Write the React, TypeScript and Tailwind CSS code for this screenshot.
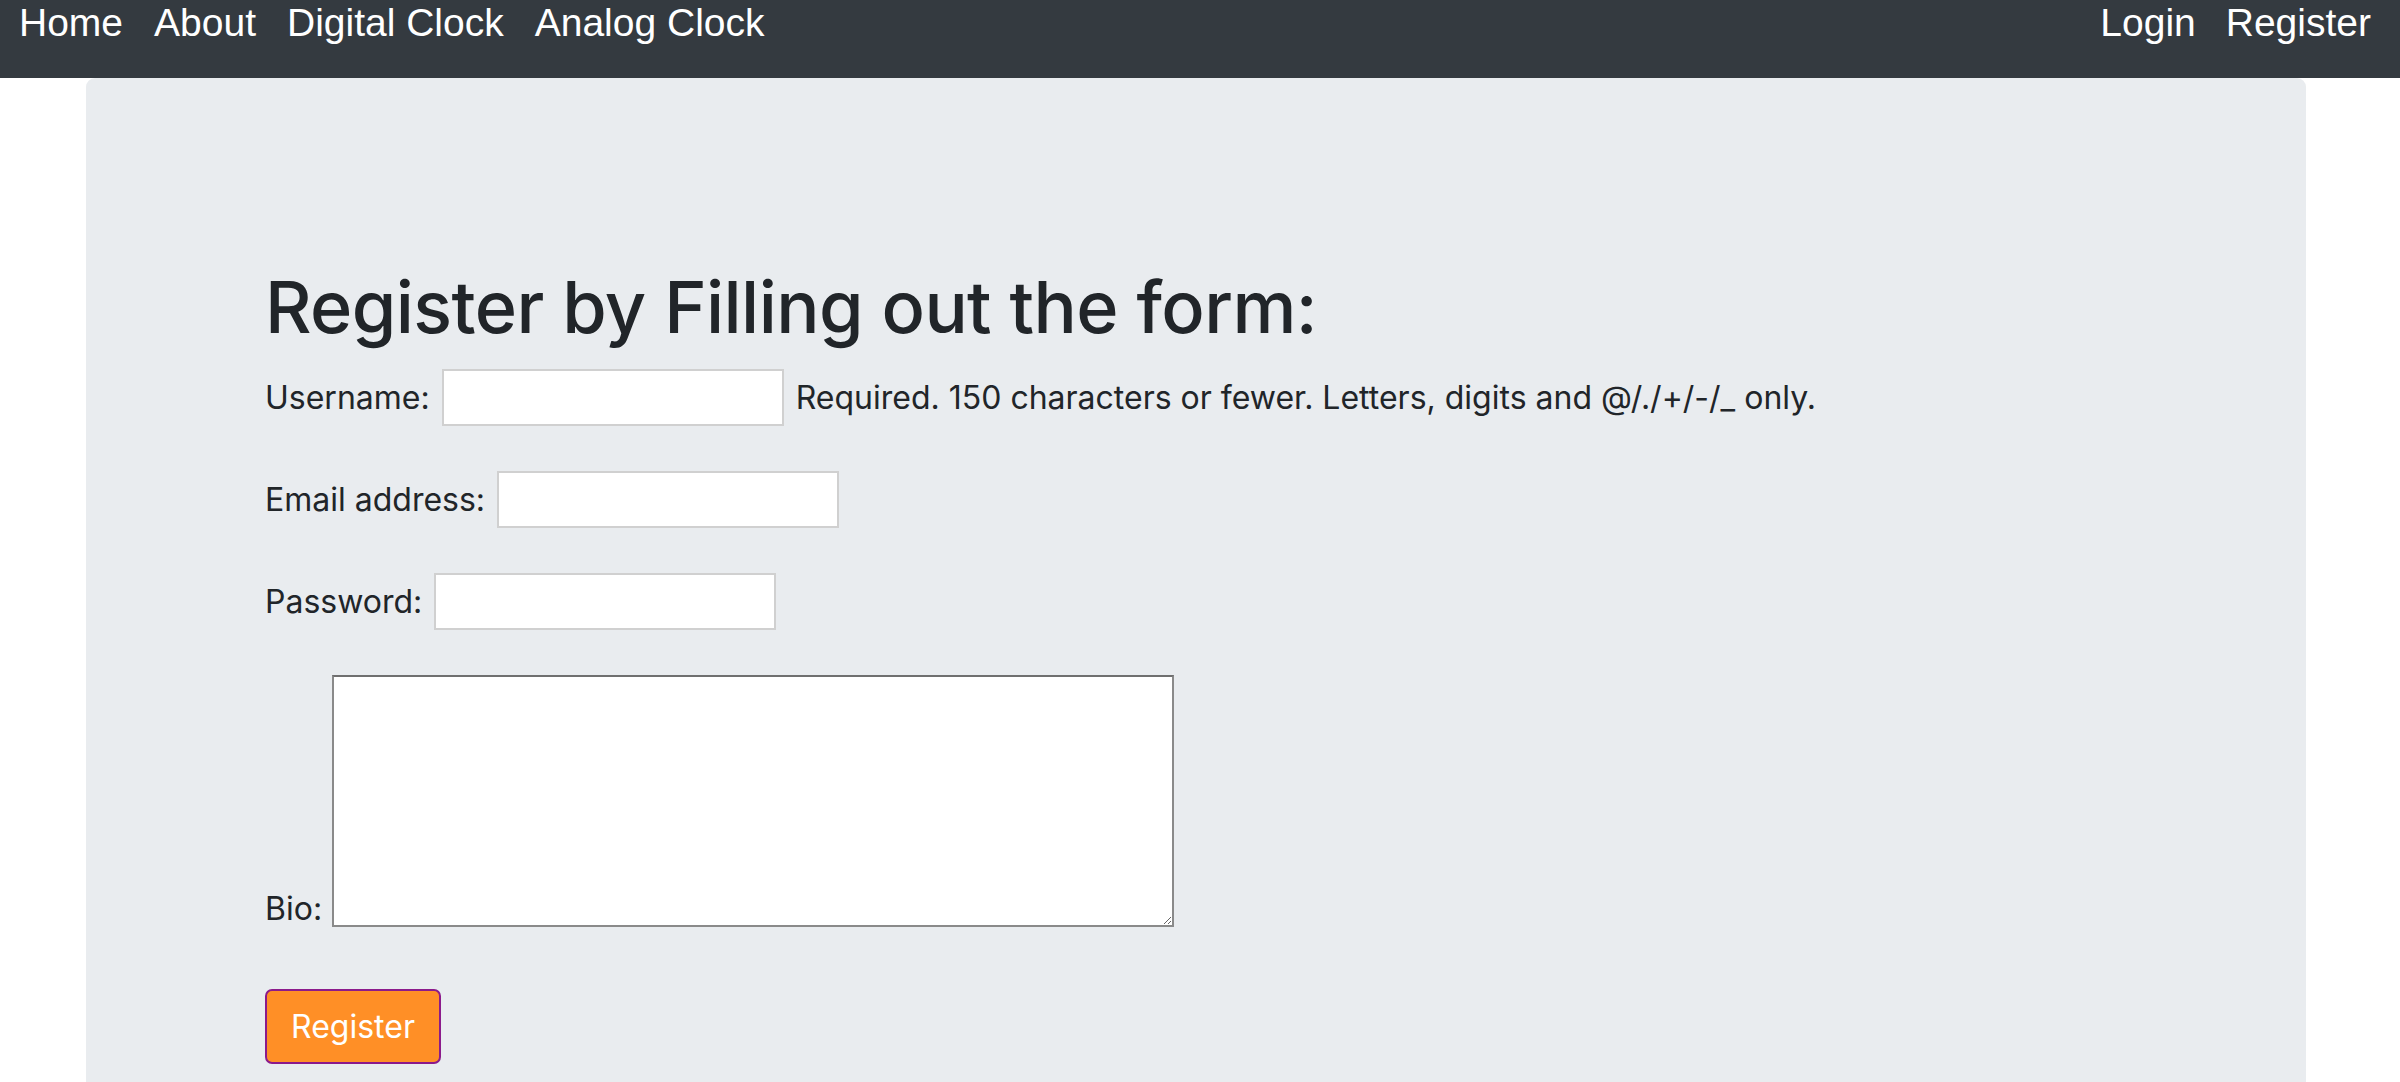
import React from 'react';

const navFont = { fontFamily: '"Liberation Sans", Arial, sans-serif' };
const bodyFont = { fontFamily: 'Inter, "Noto Sans", sans-serif' };

function FormRow({ label, help }: { label: string; help?: string }) {
  return (
    <div className="flex items-center h-[57px] mb-[45px] text-[32px] text-[#212529]">
      <label>{label}</label>
      <input type="text" className="ml-[12px] w-[342px] h-[57px] bg-white border-2 border-[#d0d0d0] outline-none" />
      {help && <span className="ml-[12px]">{help}</span>}
    </div>
  );
}

export default function App() {
  return (
    <div className="min-h-screen bg-white overflow-hidden" style={bodyFont}>
      <nav className="h-[78px] bg-[#343a40] flex justify-between items-start pl-[19px] pr-[29px] text-white text-[39px] leading-[46px]" style={navFont}>
        <div className="flex gap-[31px]">
          <a href="#">Home</a>
          <a href="#">About</a>
          <a href="#">Digital Clock</a>
          <a href="#">Analog Clock</a>
        </div>
        <div className="flex gap-[30px]">
          <a href="#">Login</a>
          <a href="#">Register</a>
        </div>
      </nav>

      <div className="mx-[86px] w-[2220px] bg-[#e9ecef] rounded-[9px] pt-[186px] pl-[179px] pb-[40px] min-h-[1004px]">
        <h1 className="text-[72px] font-medium leading-[1.2] text-[#212529] tracking-[-0.6px] mb-[19px]">
          Register by Filling out the form:
        </h1>
        <form>
          <FormRow label="Username:" help="Required. 150 characters or fewer. Letters, digits and @/./+/-/_ only." />
          <FormRow label="Email address:" />
          <FormRow label="Password:" />
          <div className="flex items-end text-[32px] text-[#212529] mb-[62px]">
            <label className="leading-[40px] mb-[-2px]">Bio:</label>
            <textarea className="ml-[10px] w-[842px] h-[252px] bg-white border-2 border-[#8a8a8a] border-t-[#6f6f6f] outline-none" />
          </div>
          <button type="button" className="w-[176px] h-[75px] bg-[#ff8f26] border-2 border-[#8b1a8b] rounded-[7px] text-white text-[32px]">
            Register
          </button>
        </form>
      </div>
    </div>
  );
}
